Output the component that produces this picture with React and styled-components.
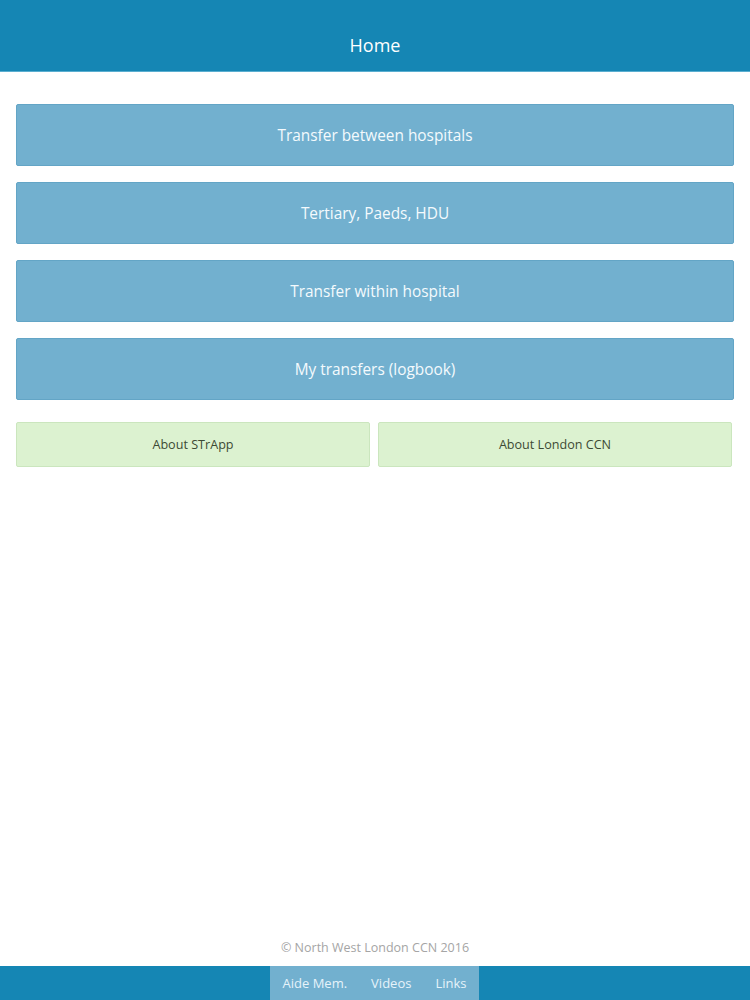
import styled, { createGlobalStyle } from "styled-components";

const GlobalStyle = createGlobalStyle`
  html, body {
    margin: 0;
    padding: 0;
    background: #ffffff;
  }
  body {
    font-family: "Open Sans", "Noto Sans", sans-serif;
  }
`;

const Page = styled.div`
  min-height: 1000px;
  display: flex;
  flex-direction: column;
`;

const Header = styled.header`
  height: 72px;
  background-color: #1586b4;
  border-bottom: 1px solid #5aaed0;
  display: flex;
  align-items: center;
  justify-content: center;
  box-sizing: border-box;
  padding-top: 18px;
`;

const Title = styled.h1`
  margin: 0;
  font-size: 18px;
  font-weight: 400;
  color: #ffffff;
`;

const Content = styled.main`
  padding: 32px 16px 0 16px;
  display: flex;
  flex-direction: column;
  gap: 16px;
`;

const BigButton = styled.button`
  width: 100%;
  height: 62px;
  background-color: #72b0cf;
  border: 1px solid #63a5c6;
  border-radius: 2px;
  color: #f4fafd;
  font-family: inherit;
  font-size: 15.4px;
  cursor: pointer;
`;

const SmallRow = styled.div`
  display: grid;
  grid-template-columns: 1fr 1fr;
  gap: 8px;
  margin-top: 6px;
  padding-right: 2px;
`;

const SmallButton = styled.button`
  height: 45px;
  background-color: #dcf2d0;
  border: 1px solid #cbe6be;
  border-radius: 2px;
  color: #3d4a34;
  font-family: inherit;
  font-size: 12.6px;
  cursor: pointer;
`;

const Copyright = styled.p`
  margin: auto 0 10px 0;
  text-align: center;
  font-size: 12.5px;
  color: #a5a5a5;
`;

const Footer = styled.footer`
  height: 34px;
  background-color: #1586b4;
  display: flex;
  justify-content: center;
`;

const Tabs = styled.nav`
  display: flex;
  align-items: center;
  gap: 24px;
  padding: 0 13px;
  background-color: #72b0cf;
  margin-right: 1px;
`;

const Tab = styled.span`
  font-size: 13px;
  color: #e6f3fa;
`;

const App = () => {
  return (
    <Page>
      <GlobalStyle />
      <Header>
        <Title>Home</Title>
      </Header>
      <Content>
        <BigButton>Transfer between hospitals</BigButton>
        <BigButton>Tertiary, Paeds, HDU</BigButton>
        <BigButton>Transfer within hospital</BigButton>
        <BigButton>My transfers (logbook)</BigButton>
        <SmallRow>
          <SmallButton>About STrApp</SmallButton>
          <SmallButton>About London CCN</SmallButton>
        </SmallRow>
      </Content>
      <Copyright>© North West London CCN 2016</Copyright>
      <Footer>
        <Tabs>
          <Tab>Aide Mem.</Tab>
          <Tab>Videos</Tab>
          <Tab>Links</Tab>
        </Tabs>
      </Footer>
    </Page>
  );
};

export default App;
